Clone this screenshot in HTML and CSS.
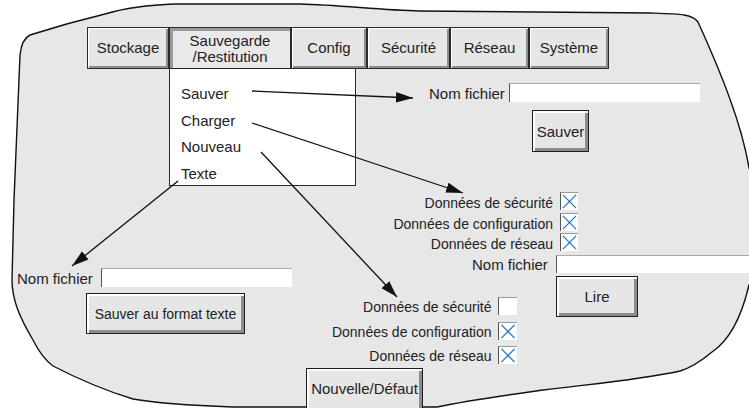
FILE: index.html
```html
<!DOCTYPE html>
<html lang="fr">
<head>
<meta charset="utf-8">
<title>Sauvegarde / Restitution</title>
<link rel="stylesheet" href="styles.css">
</head>
<body>
<div class="canvas">
  <svg class="backdrop" width="749" height="408" viewBox="0 0 749 408">
    <defs>
      <marker id="head" markerUnits="userSpaceOnUse" markerWidth="18" markerHeight="12" refX="17" refY="6" orient="auto">
        <path d="M0,0.8 L17,6 L0,11.2 Z" fill="#111"/>
      </marker>
    </defs>
    <path class="blob" d="M 30 35 C 55 27, 80 20, 105 14 C 125 8, 145 5, 175 4 L 300 4 C 340 5, 380 10, 420 11 L 650 13 C 680 14, 692 14, 698 22 C 722 75, 742 125, 749 168 C 778 210, 778 255, 749 285 C 742 315, 730 340, 712 352 C 700 362, 690 368, 680 371 C 640 380, 590 384, 543 390 C 500 396, 470 400, 437 407 L 233 407 C 180 405, 150 402, 133 399 C 110 392, 80 380, 53 366 C 45 360, 38 350, 33 340 C 20 318, 12 300, 12 280 L 14 200 L 20 55 C 21 45, 24 38, 30 35 Z"/>
  </svg>

  <nav class="tabs">
    <div class="tab w-stockage">Stockage</div>
    <div class="tab tab-active w-sauve">Sauvegarde<br>/Restitution</div>
    <div class="tab w-config">Config</div>
    <div class="tab w-secu">Sécurité</div>
    <div class="tab w-reseau">Réseau</div>
    <div class="tab w-systeme">Système</div>
  </nav>

  <ul class="menu">
    <li>Sauver</li>
    <li>Charger</li>
    <li>Nouveau</li>
    <li>Texte</li>
  </ul>

  <div class="node save-group">
    <div class="field-row">
      <span class="label">Nom fichier</span>
      <span class="input input-save"></span>
    </div>
    <div class="btn btn-sauver">Sauver</div>
  </div>

  <div class="node load-checks">
    <div class="check-row"><span class="small">Données de sécurité</span><span class="box"><svg viewBox="0 0 18 18"><path d="M2 2 L16 16 M16 2 L2 16"/></svg></span></div>
    <div class="check-row"><span class="small">Données de configuration</span><span class="box"><svg viewBox="0 0 18 18"><path d="M2 2 L16 16 M16 2 L2 16"/></svg></span></div>
    <div class="check-row"><span class="small">Données de réseau</span><span class="box"><svg viewBox="0 0 18 18"><path d="M2 2 L16 16 M16 2 L2 16"/></svg></span></div>
  </div>

  <div class="node load-file">
    <div class="field-row">
      <span class="label">Nom fichier</span>
      <span class="input input-load"></span>
    </div>
    <div class="btn btn-lire">Lire</div>
  </div>

  <div class="node new-checks">
    <div class="check-row"><span class="small">Données de sécurité</span><span class="box box-wide"></span></div>
    <div class="check-row"><span class="small">Données de configuration</span><span class="box box-wide"><svg viewBox="0 0 18 18"><path d="M2 2 L16 16 M16 2 L2 16"/></svg></span></div>
    <div class="check-row"><span class="small">Données de réseau</span><span class="box box-wide"><svg viewBox="0 0 18 18"><path d="M2 2 L16 16 M16 2 L2 16"/></svg></span></div>
  </div>

  <div class="node btn btn-new">Nouvelle/Défaut</div>

  <div class="node text-group">
    <div class="field-row">
      <span class="label">Nom fichier</span>
      <span class="input input-text"></span>
    </div>
    <div class="btn btn-text">Sauver au format texte</div>
  </div>

  <svg class="arrows" width="749" height="408" viewBox="0 0 749 408">
    <path d="M252 91 L413 98" marker-end="url(#head)"/>
    <path d="M252 123 L463 193" marker-end="url(#head)"/>
    <path d="M261 152 L397 297" marker-end="url(#head)"/>
    <path d="M178 181 L72 266" marker-end="url(#head)"/>
  </svg>
</div>
</body>
</html>
```

FILE: styles.css
```css
* { box-sizing: border-box; }

html, body {
  margin: 0;
  padding: 0;
  background: #ffffff;
}

body {
  font-family: "Liberation Sans", Arial, sans-serif;
  color: #222;
  font-size: 15px;
}

.canvas {
  position: relative;
  width: 749px;
  height: 408px;
  overflow: hidden;
}

.backdrop, .arrows {
  position: absolute;
  left: 0;
  top: 0;
}

.arrows { pointer-events: none; }

.arrows path {
  stroke: #111;
  stroke-width: 1.3;
  fill: none;
}

.blob {
  fill: #e7e7e8;
  stroke: #111;
  stroke-width: 1.4;
}

/* tabs */
.tabs {
  position: absolute;
  left: 87px;
  top: 27px;
  display: flex;
  height: 42px;
}

.tab {
  height: 42px;
  display: flex;
  align-items: center;
  justify-content: center;
  text-align: center;
  line-height: 16px;
  font-size: 15px;
  background: #e6e6e7;
  border: 1px solid #2a2a2a;
  box-shadow: inset 1px 1px 0 #ffffff, inset -2px -2px 0 #8c8c8c;
  white-space: nowrap;
}

.tab-active {
  box-shadow: inset 3px 3px 0 #9a9a9a;
  background: #e9e9ea;
  padding-top: 2px;
}

.w-stockage { width: 82px; }
.w-sauve { width: 122px; }
.w-config { width: 76px; }
.w-secu { width: 83px; }
.w-reseau { width: 79px; }
.w-systeme { width: 80px; }

/* dropdown menu */
.menu {
  position: absolute;
  left: 169px;
  top: 68px;
  width: 187px;
  height: 118px;
  margin: 0;
  padding: 12px 0 0 11px;
  list-style: none;
  background: #ffffff;
  border: 1px solid #2a2a2a;
}

.menu li {
  line-height: 26.6px;
  height: 26.6px;
  font-size: 15px;
}

.node { position: absolute; }

.field-row {
  display: flex;
  align-items: flex-end;
}

.label {
  font-size: 15px;
  line-height: 16px;
  white-space: nowrap;
  flex-shrink: 0;
}

.input {
  display: block;
  flex-shrink: 0;
  height: 19px;
  background: #ffffff;
  border-left: 1.5px solid #555;
  border-top: 1px solid #a8a8a8;
}

.btn {
  display: flex;
  align-items: center;
  justify-content: center;
  background: #e6e6e7;
  border: 1px solid #1e1e1e;
  box-shadow: inset 2px 2px 0 #ffffff, inset -3px -3px 0 #8c8c8c;
  font-size: 15px;
  white-space: nowrap;
}

/* Sauver group */
.save-group {
  left: 429px;
  top: 83px;
  display: flex;
  flex-direction: column;
}
.save-group .field-row { gap: 4px; }
.input-save { width: 191px; }
.btn-sauver {
  margin-top: 8px;
  margin-left: 103px;
  width: 57px;
  height: 42px;
}

/* checkboxes */
.load-checks {
  right: 171px;
  top: 192px;
  display: flex;
  flex-direction: column;
  align-items: flex-end;
  gap: 2.7px;
}

.check-row {
  display: flex;
  align-items: flex-end;
  gap: 7px;
  white-space: nowrap;
}

.small {
  font-size: 14px;
  line-height: 16px;
}

.load-checks .small { margin-bottom: -1px; }

.box {
  display: block;
  flex-shrink: 0;
  width: 18px;
  height: 18px;
  background: #ffffff;
  border-left: 1.5px solid #555;
  border-top: 1px solid #9a9a9a;
}

.box svg {
  display: block;
  width: 100%;
  height: 100%;
}

.box svg path {
  stroke: #2a78c0;
  stroke-width: 1.4;
  fill: none;
}

.box-wide { width: 19px; }

/* Lire group */
.load-file {
  left: 472px;
  top: 255px;
  display: flex;
  flex-direction: column;
  width: 300px;
}
.load-file .field-row { gap: 8px; }
.input-load { width: 200px; height: 18px; }
.btn-lire {
  margin-top: 3px;
  margin-left: 84px;
  width: 82px;
  height: 41px;
}

.new-checks {
  right: 232px;
  top: 297px;
  display: flex;
  flex-direction: column;
  align-items: flex-end;
  gap: 6.5px;
}
.new-checks .check-row { gap: 6.5px; }

.btn-new {
  left: 306px;
  top: 368px;
  width: 117px;
  height: 40px;
  box-shadow: inset 2px 2px 0 #ffffff, inset -3px 0 0 #8c8c8c;
  border-bottom: none;
}

/* Texte group */
.text-group {
  left: 17px;
  top: 268px;
  display: flex;
  flex-direction: column;
}
.text-group .field-row { gap: 8px; }
.input-text { width: 191px; }
.btn-text {
  margin-top: 6px;
  margin-left: 69px;
  width: 159px;
  height: 41px;
  font-size: 14px;
}
```
